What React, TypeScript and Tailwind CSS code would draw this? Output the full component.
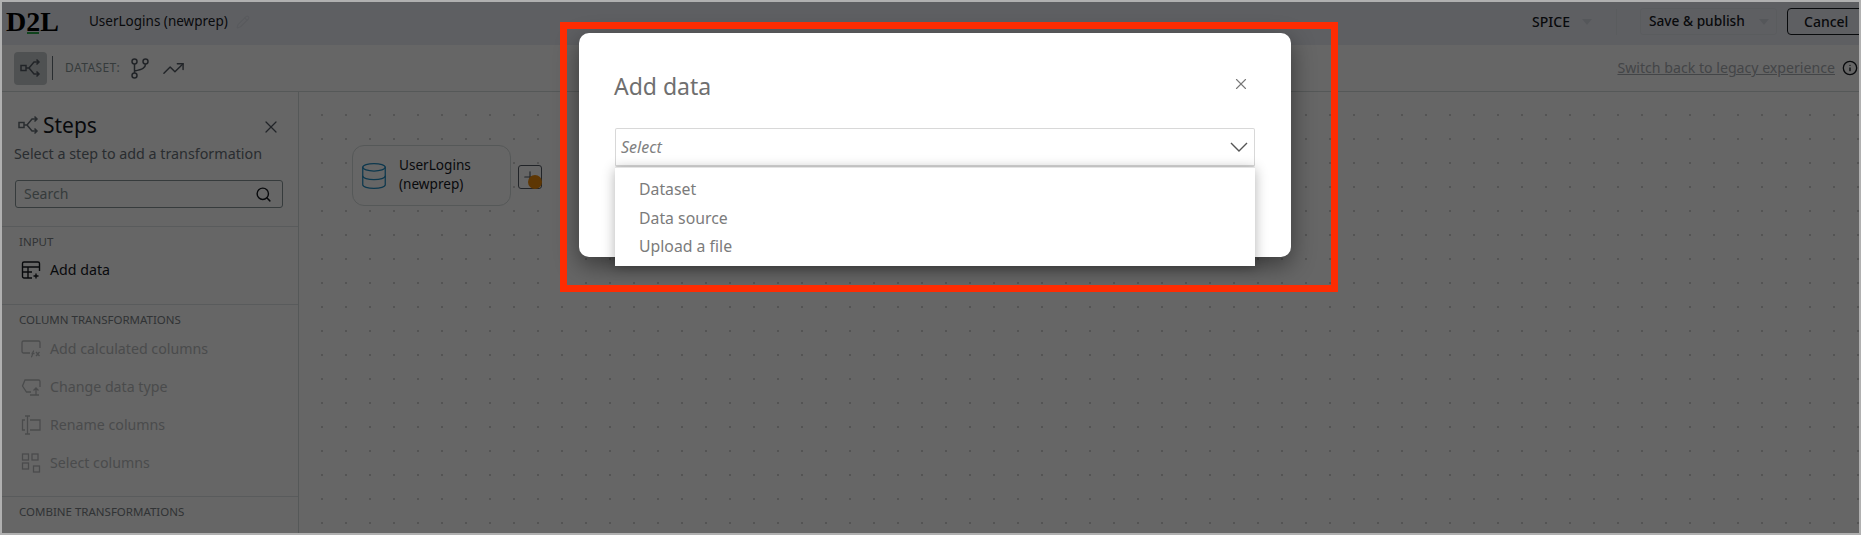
import { Database, Info, Pencil, Plus, Search, TrendingUp, X } from "lucide-react";
import { ReactNode } from "react";

function FlowIcon({ className }: { className?: string }) {
    return (
        <svg viewBox="0 0 22 20" fill="none" stroke="currentColor" strokeWidth="1.5" className={className}>
            <rect x="1" y="7.5" width="5" height="5" />
            <path d="M6 10h3l5-6h5M9 10l5 6h5M16.5 1.5 19 4l-2.5 2.5M16.5 13.5 19 16l-2.5 2.5" />
        </svg>
    );
}

function BranchIcon() {
    return (
        <svg viewBox="0 0 18 21" fill="none" stroke="currentColor" strokeWidth="1.5" className="ml-[11px] w-[18px] h-[21px] text-[#545b64]">
            <circle cx="3.500" cy="3.500" r="2.500" />
            <circle cx="14.500" cy="3.500" r="2.500" />
            <circle cx="3.500" cy="17.500" r="2.500" />
            <path d="M3.500 6v9M14.500 6c0 4-3 5.500-11 7" />
        </svg>
    );
}

function TableIcon() {
    return (
        <svg viewBox="0 0 20 20" fill="none" stroke="currentColor" strokeWidth="1.4" className="w-5 h-5 shrink-0">
            <path d="M11 18H3a1.5 1.5 0 0 1-1.5-1.5v-13A1.5 1.5 0 0 1 3 2h14a1.5 1.5 0 0 1 1.5 1.5V11M1.5 7h17M1.5 12H11M7 7v11M15 13.5v5M12.5 16h5" />
        </svg>
    );
}

function CalcIcon() {
    return (
        <svg viewBox="0 0 20 20" fill="none" stroke="currentColor" strokeWidth="1.3" className="w-5 h-5 shrink-0">
            <path d="M9 14H2.500A1.500 1.500 0 0 1 1 12.500V3.500A1.500 1.500 0 0 1 2.500 2h15A1.500 1.500 0 0 1 19 3.500V9" />
            <path d="M10 18c2 0 1-6 3-6M10.500 14.500h3M15 13l3.500 4M18.500 13 15 17" />
        </svg>
    );
}

function TypeIcon() {
    return (
        <svg viewBox="0 0 20 20" fill="none" stroke="currentColor" strokeWidth="1.3" className="w-5 h-5 shrink-0">
            <path d="M10 15H5.500L1.500 9l2.500-6h13.500A1.500 1.500 0 0 1 19 4.500V10" />
            <path d="M15 18v-7M12.500 13.500 15 11l2.500 2.500M9 18h9" />
        </svg>
    );
}

function RenameIcon() {
    return (
        <svg viewBox="0 0 20 20" fill="none" stroke="currentColor" strokeWidth="1.3" className="w-5 h-5 shrink-0">
            <path d="M4 5H1.500v10H4M9 5h10v10H9M6.500 1v18M4 1h5M4 19h5" />
        </svg>
    );
}

function SelectIcon() {
    return (
        <svg viewBox="0 0 20 20" fill="none" stroke="currentColor" strokeWidth="1.3" className="w-5 h-5 shrink-0">
            <rect x="1.500" y="1" width="6" height="6" />
            <rect x="11" y="1" width="6" height="6" />
            <rect x="1.500" y="10" width="6" height="6" />
            <rect x="12.500" y="13" width="6" height="6" />
        </svg>
    );
}

function Divider() {
    return <div className="h-px bg-[#dfe3e6]" />;
}

function SectionLabel({ children }: { children: ReactNode }) {
    return <p className="text-[11.500px] leading-4 text-[#7a7f85]">{children}</p>;
}

function Step({ icon, label, disabled }: { icon: ReactNode; label: string; disabled?: boolean }) {
    return (
        <div className={`h-[38px] flex items-center gap-[9px] text-[14.200px] ${disabled ? "text-[#b9bcbe]" : "text-[#16191f]"}`}>
            {icon}
            <span>{label}</span>
        </div>
    );
}

function Sidebar() {
    return (
        <aside className="w-[297px] shrink-0 border-r border-[#d5dbdb] bg-white flex flex-col">
            <div className="pl-3 pr-[14px] pt-[19px] h-[134px] shrink-0">
                <div className="flex items-center justify-between pr-[3px]">
                    <div className="flex items-center gap-[3px] pl-1">
                        <FlowIcon className="w-[22px] h-5 text-[#687078]" />
                        <span className="text-[21px] leading-7 text-[#16191f]">Steps</span>
                    </div>
                    <X size={20} strokeWidth={1.5} className="text-[#545b64] mt-1" />
                </div>
                <p className="text-[14.300px] leading-5 text-[#687078] mt-[5px] whitespace-nowrap">Select a step to add a transformation</p>
                <div className="mt-4 ml-px mr-px h-[28px] border border-[#879596] rounded-[3px] flex items-center justify-between pl-2 pr-[10px]">
                    <span className="text-sm text-[#879596]">Search</span>
                    <Search size={17} strokeWidth={2} className="text-[#16191f]" />
                </div>
            </div>
            <Divider />
            <div className="h-[77px] shrink-0 pl-[17px] pt-[7px]">
                <SectionLabel>INPUT</SectionLabel>
                <div className="pl-[2px] mt-[1px]">
                    <Step icon={<TableIcon />} label="Add data" />
                </div>
            </div>
            <Divider />
            <div className="h-[191px] shrink-0 pl-[17px] pt-[7px]">
                <SectionLabel>COLUMN TRANSFORMATIONS</SectionLabel>
                <div className="pl-[2px] mt-[2px]">
                    <Step disabled icon={<CalcIcon />} label="Add calculated columns" />
                    <Step disabled icon={<TypeIcon />} label="Change data type" />
                    <Step disabled icon={<RenameIcon />} label="Rename columns" />
                    <Step disabled icon={<SelectIcon />} label="Select columns" />
                </div>
            </div>
            <Divider />
            <div className="pl-[17px] pt-[7px]">
                <SectionLabel>COMBINE TRANSFORMATIONS</SectionLabel>
            </div>
        </aside>
    );
}

function Canvas() {
    return (
        <main className="flex-1 bg-white bg-[radial-gradient(circle_at_23px_23px,#d2d2d2_0.8px,transparent_1.1px)] bg-[length:24px_24px] pl-[53px] pt-[53px]">
            <div className="flex items-center gap-[7px]">
                <div className="w-[159px] h-[61px] bg-white border border-[#d5dbdb] rounded-xl flex items-center gap-[10px] pl-[6px]">
                    <Database size={30} strokeWidth={1} className="text-[#1f8ac0]" />
                    <p className="text-[13.600px] leading-[19px] -mt-1 text-[#16191f]">UserLogins<br />(newprep)</p>
                </div>
                <div className="relative w-6 h-6 mt-[3px] bg-white border border-[#545b64] rounded-[3px] flex items-center justify-center">
                    <Plus size={18} strokeWidth={1.5} className="text-[#545b64]" />
                    <span className="absolute -right-[1px] -bottom-[1px] w-[14px] h-[14px] rounded-full bg-[#ec8a0c]" />
                </div>
            </div>
        </main>
    );
}

function Modal() {
    return (
        <div className="absolute left-[577px] top-[31px] w-[712px] h-[224px] bg-white rounded-[10px] shadow-[0_8px_24px_rgba(0,0,0,0.45)] pl-9 pr-[36px]">
            <div className="flex items-start justify-between pt-[37px] h-[95px]">
                <h2 className="text-[23px] leading-8 -ml-px text-[#6f6f6f]">Add data</h2>
                <X size={18} strokeWidth={1.5} className="text-[#777777] mr-[5px] mt-[5px]" />
            </div>
            <div className="relative">
                <div className="h-[39px] border border-[#d8d8d8] border-b-2 rounded-[2px] flex items-center justify-between pl-[5px] pr-[6px]">
                    <span className="text-[16px] italic text-[#808080]">Select</span>
                    <svg viewBox="0 0 18 10" fill="none" stroke="currentColor" strokeWidth="1.4" className="w-[18px] h-[10px] text-[#555555]">
                        <path d="M1 1l8 8 8-8" />
                    </svg>
                </div>
                <ul className="absolute left-0 right-0 top-[39px] h-[99px] bg-white border-t border-[#e4e4e4] shadow-[0_2px_12px_rgba(0,0,0,0.3)] pl-6 pt-[7px] text-[15.800px] leading-[28.500px] text-[#7b7b7b]">
                    <li>Dataset</li>
                    <li>Data source</li>
                    <li>Upload a file</li>
                </ul>
            </div>
        </div>
    );
}

export default function App() {
    return (
        <div className="relative w-[1861px] h-[535px] overflow-hidden border-2 border-[#b0b0b0] bg-white font-['Noto_Sans',sans-serif]">
            <header className="h-[43px] bg-[#eceef6] flex items-center justify-between pl-1 pb-1">
                <div className="flex items-center">
                    <span className="relative w-[83px] text-[28px] leading-8 font-bold font-['Liberation_Serif',serif] text-black">
                        D2L
                        <span className="absolute left-[21px] top-[26px] w-3 h-[2px] bg-[#2aa84a]" />
                    </span>
                    <span className="text-[13.500px] text-[#16191f]">UserLogins (newprep)</span>
                    <Pencil size={14} className="ml-2 text-[#dde0e8]" />
                </div>
                <div className="flex items-center -mr-[8px]">
                    <span className="text-sm font-medium text-[#16191f]">SPICE</span>
                    <span className="ml-3 w-0 h-0 border-x-[5px] border-x-transparent border-t-[6px] border-t-[#d5d9e2]" />
                    <span className="ml-[24px] w-px h-[26px] bg-[#e2e5ec]" />
                    <div className="ml-[23px] w-[137px] h-[27px] border border-[#e2e5ec] rounded-[3px] flex items-center pl-2 gap-[14px]">
                        <span className="text-[13.700px] font-medium text-[#16191f]">Save &amp; publish</span>
                        <span className="w-0 h-0 border-x-[5px] border-x-transparent border-t-[6px] border-t-[#d5d9e2]" />
                    </div>
                    <div className="ml-[10px] w-[80px] h-[27px] border border-[#16191f] rounded-[4px] pl-[16px] flex items-center">
                        <span className="text-sm font-medium text-[#16191f]">Cancel</span>
                    </div>
                </div>
            </header>
            <div className="h-[47px] border-b border-[#d5dbdb] bg-white flex items-center justify-between pl-3 pr-px">
                <div className="flex items-center">
                    <div className="w-[33px] h-[33px] rounded-[4px] bg-[#c6cacd] flex items-center justify-center">
                        <FlowIcon className="w-[22px] h-5 text-[#545b64]" />
                    </div>
                    <span className="ml-[5px] w-px h-6 bg-[#687078]" />
                    <span className="ml-3 text-xs text-[#879596] tracking-[0.4px]">DATASET:</span>
                    <BranchIcon />
                    <TrendingUp size={23} strokeWidth={1.5} className="ml-[13px] text-[#545b64]" />
                </div>
                <div className="flex items-center gap-[7px]">
                    <span className="text-[14.150px] underline text-[#a9adb2]">Switch back to legacy experience</span>
                    <Info size={16} className="text-[#16191f]" />
                </div>
            </div>
            <div className="flex h-[441px]">
                <Sidebar />
                <Canvas />
            </div>
            {/* dim layer, modal and the red annotation sit over the page */}
            <div className="absolute inset-0 bg-black/60" />
            <Modal />
            <div className="absolute left-[558px] top-[20px] w-[778px] h-[270px] border-[7px] border-[#fe2c02]" />
        </div>
    );
}
